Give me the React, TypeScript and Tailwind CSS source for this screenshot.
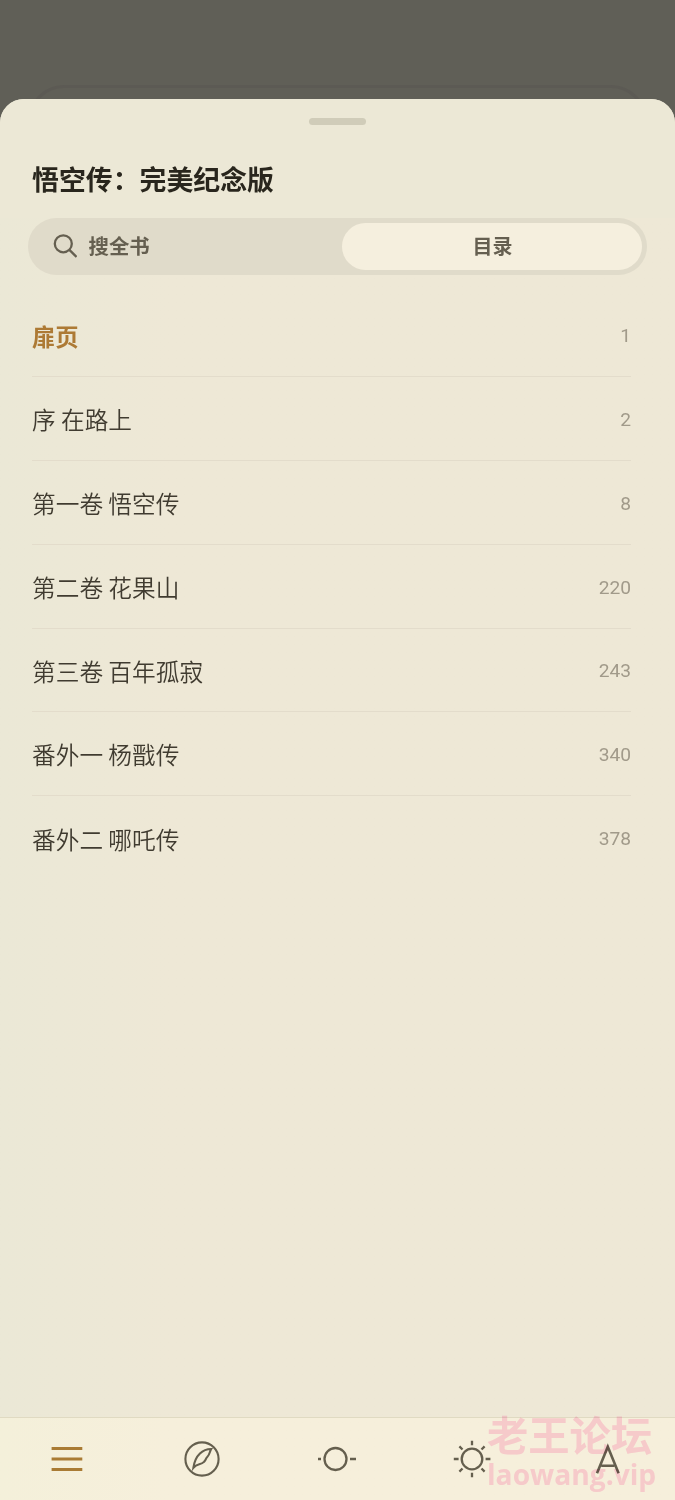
import { useState } from "react";

type Chapter = {
  title: string;
  page: number;
};

const chapters: Chapter[] = [
  { title: "扉页", page: 1 },
  { title: "序 在路上", page: 2 },
  { title: "第一卷 悟空传", page: 8 },
  { title: "第二卷 花果山", page: 220 },
  { title: "第三卷 百年孤寂", page: 243 },
  { title: "番外一 杨戬传", page: 340 },
  { title: "番外二 哪吒传", page: 378 },
];

function SearchIcon() {
  return (
    <svg width="24" height="24" viewBox="0 0 24 24" fill="none" stroke="currentColor" strokeWidth="2.3">
      <circle cx="10.3" cy="9.8" r="8.5" />
      <path d="M16.4 15.9 23.5 23" />
    </svg>
  );
}

function MenuIcon() {
  return (
    <svg width="40" height="40" viewBox="0 0 40 40" fill="none" stroke="currentColor" strokeWidth="3">
      <path d="M4.6 9.5H35.3M4.6 20H35.3M4.6 30.5H35.3" />
    </svg>
  );
}

function CompassIcon() {
  return (
    <svg width="40" height="40" viewBox="0 0 40 40" fill="none" stroke="currentColor" strokeWidth="2.1">
      <circle cx="20" cy="20" r="16.6" />
      <path d="M29.2 10C21 10.2 13.3 15.5 11.4 28.7C15.2 24.2 18.7 26.4 22 22.9C24.6 20.6 23.4 19.5 25.4 17.7C27.8 15.4 27.4 13 29.2 10Z" />
    </svg>
  );
}

function ProgressIcon() {
  return (
    <svg width="40" height="40" viewBox="0 0 40 40" fill="none" stroke="currentColor" strokeWidth="2.3">
      <circle cx="18.5" cy="20" r="11" />
      <path d="M1 20H4M33 20H39" />
    </svg>
  );
}

function SunIcon() {
  return (
    <svg width="40" height="40" viewBox="0 0 40 40" fill="none" stroke="currentColor" strokeWidth="2.3">
      <circle cx="20" cy="20" r="10.3" />
      <path d="M20 1.8V6.3M20 33.7V38.2M1.8 20H6.6M33.6 20H38.4M7.4 7.4 10.5 10.5M29.5 29.5 32.6 32.6M32.6 7.4 29.5 10.5M10.5 29.5 7.4 32.6" />
    </svg>
  );
}

function FontIcon() {
  return (
    <svg width="40" height="40" viewBox="0 0 40 40" fill="none" stroke="currentColor" strokeWidth="2.6">
      <path d="M10 34.2 20.8 7.8 31.6 34.2M14.3 26.8H27.3" />
    </svg>
  );
}

const navItems = [
  { label: "目录", Icon: MenuIcon },
  { label: "发现", Icon: CompassIcon },
  { label: "进度", Icon: ProgressIcon },
  { label: "亮度", Icon: SunIcon },
  { label: "字体", Icon: FontIcon },
];

export default function App() {
  const [current, setCurrent] = useState(0);
  const [nav, setNav] = useState(0);

  return (
    <div className="relative flex h-[1500px] w-[675px] flex-col overflow-hidden bg-[#605f57] font-['Noto_Sans_CJK_SC',sans-serif]">
      {/* edge of the page behind the sheet */}
      <div className="mx-7 mt-[85px] h-3.5 shrink-0 overflow-hidden">
        <div className="h-20 rounded-[36px] border-3 border-[#5c5a54]" />
      </div>

      <section className="flex min-h-0 flex-1 flex-col rounded-t-[24px] bg-linear-to-r from-[#ebe8d6] to-[#eee8d6] to-25%">
        <div className="flex h-[119px] shrink-0 flex-col rounded-t-[24px] bg-[#ece8d6]">
          <div className="mx-auto mt-[19px] h-[7px] w-[57px] shrink-0 rounded-full bg-[#d0ccb9]" />

          <h1 className="mt-[34px] ml-8 text-[26.9px] leading-10 font-bold text-[#29261d]">悟空传：完美纪念版</h1>
        </div>

        <div className="mx-7 flex h-[57px] shrink-0 rounded-full bg-[#e0dbca] p-[5px] text-[20.4px] font-bold text-[#655f50]">
          <button className="flex w-[309px] items-center gap-3 pb-0.5 pl-[19.5px]">
            <SearchIcon />
            搜全书
          </button>
          <button className="flex-1 rounded-full bg-[#f5efde] pb-0.5 pl-px text-[20px]">目录</button>
        </div>

        <ul className="mt-[18.5px] mr-11 ml-8 flex-1">
          {chapters.map((chapter, i) => (
            <li key={chapter.title} className="h-[83.75px] border-b border-[#e3dccb] last:border-b-0">
              <button
                onClick={() => setCurrent(i)}
                className="flex h-full w-full items-center justify-between pt-[3px] text-left"
              >
                <span
                  className={
                    i === current
                      ? "text-[23.3px] font-bold text-[#ad7a35]"
                      : "text-[23.7px] font-[350] text-[#403b30]"
                  }
                >
                  {chapter.title}
                </span>
                <span className="pt-px font-[Roboto,sans-serif] text-[19.2px] text-[#a19a8a]">{chapter.page}</span>
              </button>
            </li>
          ))}
        </ul>

        <nav className="flex h-[83px] shrink-0 border-t border-[#e0dac2] bg-linear-to-r from-[#f4f0da] to-[#f6efdb] to-25%">
          {navItems.map(({ label, Icon }, i) => (
            <button
              key={label}
              aria-label={label}
              onClick={() => setNav(i)}
              className={`flex flex-1 items-center justify-center pr-0.5 ${i === nav ? "text-[#a97b34]" : "text-[#655f4e]"}`}
            >
              <Icon />
            </button>
          ))}
        </nav>
      </section>

      {/* multiply keeps the font icon readable under the forum mark */}
      <div className="pointer-events-none absolute top-[1411px] left-[487px] font-bold text-[#ffd8eb] mix-blend-multiply">
        <p className="text-[41.3px] leading-[44px]">老王论坛</p>
        <p className="mt-[3px] font-['Open_Sans',sans-serif] text-[28.2px] leading-8">laowang.vip</p>
      </div>
    </div>
  );
}
